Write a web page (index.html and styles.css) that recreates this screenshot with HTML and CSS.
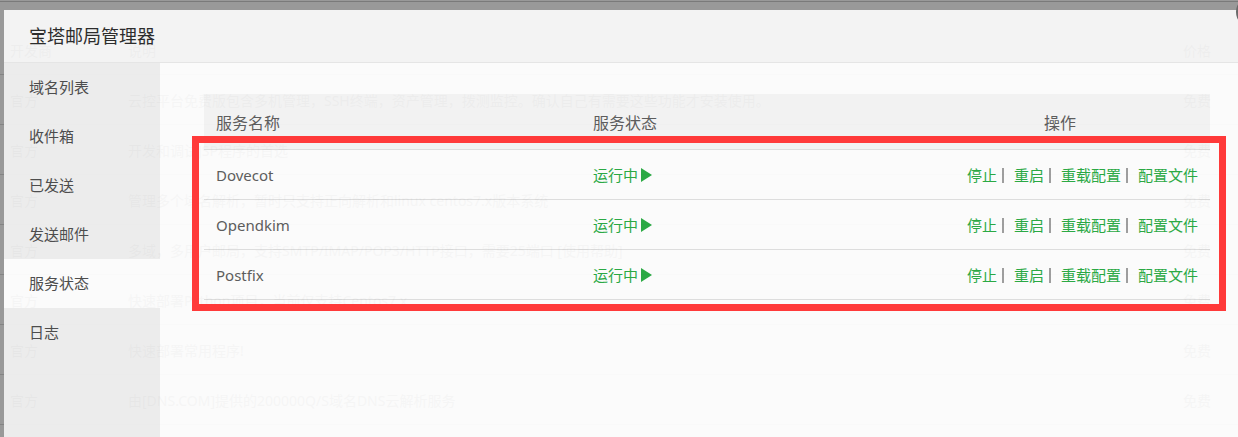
FILE: index.html
```html
<!DOCTYPE html>
<html lang="zh-CN">
<head>
    <meta charset="UTF-8">
    <meta name="viewport" content="width=device-width, initial-scale=1.0">
    <title>宝塔邮局管理器</title>
    <link rel="stylesheet" href="styles.css">
</head>
<body>
    <div class="page">
        <table class="soft-list">
            <colgroup>
                <col class="col-dev">
                <col>
                <col class="col-price">
            </colgroup>
            <thead>
                <tr><th>开发商</th><th>说明</th><th>价格</th></tr>
            </thead>
            <tbody>
                <tr><td>官方</td><td>云控平台免费版包含多机管理，SSH终端，资产管理，拨测监控。确认自己有需要这些功能才安装使用。</td><td>免费</td></tr>
                <tr><td>官方</td><td>开发和调试JSP程序的首选</td><td>免费</td></tr>
                <tr><td>官方</td><td>管理多个域名解析，暂时只支持正向解析和linux centos7.x版本系统</td><td>免费</td></tr>
                <tr><td>官方</td><td>多域，多用户邮局，支持SMTP/IMAP/POP3/HTTP接口，需要25端口 [使用帮助]</td><td>免费</td></tr>
                <tr><td>官方</td><td>快速部署Python项目，当前仅支持Centos7.x</td><td>免费</td></tr>
                <tr><td>官方</td><td>快速部署常用程序!</td><td>免费</td></tr>
                <tr><td>官方</td><td>由[DNS.COM]提供的200000Q/S域名DNS云解析服务</td><td>免费</td></tr>
            </tbody>
        </table>
    </div>

    <div class="layer">
        <div class="layer-title">宝塔邮局管理器</div>
        <div class="layer-body">
            <ul class="mail-menu">
                <li>域名列表</li>
                <li>收件箱</li>
                <li>已发送</li>
                <li>发送邮件</li>
                <li class="on">服务状态</li>
                <li>日志</li>
            </ul>
            <div class="mail-content">
                <table class="service-table">
                    <colgroup>
                        <col class="col-name">
                        <col class="col-state">
                        <col class="col-opt">
                    </colgroup>
                    <thead>
                        <tr><th>服务名称</th><th>服务状态</th><th class="opt-head">操作</th></tr>
                    </thead>
                    <tbody>
                        <tr>
                            <td>Dovecot</td>
                            <td><span class="state">运行中<svg class="play" viewBox="0 0 11 14"><polygon points="0,0 11,7 0,14"/></svg></span></td>
                            <td class="opt"><a>停止</a><i class="sep"></i><a>重启</a><i class="sep"></i><a>重载配置</a><i class="sep"></i><a>配置文件</a></td>
                        </tr>
                        <tr>
                            <td>Opendkim</td>
                            <td><span class="state">运行中<svg class="play" viewBox="0 0 11 14"><polygon points="0,0 11,7 0,14"/></svg></span></td>
                            <td class="opt"><a>停止</a><i class="sep"></i><a>重启</a><i class="sep"></i><a>重载配置</a><i class="sep"></i><a>配置文件</a></td>
                        </tr>
                        <tr>
                            <td>Postfix</td>
                            <td><span class="state">运行中<svg class="play" viewBox="0 0 11 14"><polygon points="0,0 11,7 0,14"/></svg></span></td>
                            <td class="opt"><a>停止</a><i class="sep"></i><a>重启</a><i class="sep"></i><a>重载配置</a><i class="sep"></i><a>配置文件</a></td>
                        </tr>
                    </tbody>
                </table>
            </div>
        </div>
    </div>
    <span class="layer-close"></span>

    <div class="mark-box"></div>
</body>
</html>
```

FILE: styles.css
```css
html, body {
    margin: 0;
    padding: 0;
    overflow: hidden;
    height: 100%;
}
body {
    font-family: "Microsoft YaHei", "Noto Sans", "Noto Sans CJK SC", sans-serif;
    background-color: #fff;
    color: #333;
}
.page {
    border-top: 1px solid #ccc;
    margin-top: 1px;
}
.soft-list {
    width: 100%;
    margin-top: 23px;
    border-collapse: collapse;
    table-layout: fixed;
    font-size: 14px;
    color: #888;
}
.soft-list .col-dev {
    width: 118px;
}
.soft-list .col-price {
    width: 65px;
}
.soft-list th, .soft-list td {
    height: 49px;
    padding: 0 10px;
    text-align: left;
    font-weight: normal;
    border-bottom: 1px solid #ddd;
    white-space: nowrap;
    overflow: hidden;
}

.layer {
    position: absolute;
    left: 4px;
    top: 10px;
    width: 1300px;
    height: 520px;
    opacity: 0.95;
    box-shadow: 0 0 0 3000px rgba(0, 0, 0, 0.42);
    display: flex;
    flex-direction: column;
}
.layer-title {
    height: 52px;
    line-height: 52px;
    padding-left: 25px;
    font-size: 18px;
    color: #222;
    background-color: #f3f3f3;
    border-bottom: 1px solid #e4e4e4;
}
.layer-body {
    flex: 1;
    display: flex;
}
.mail-menu {
    width: 156px;
    margin: 0;
    padding: 0;
    list-style: none;
    background-color: #ececec;
}
.mail-menu li {
    height: 49px;
    line-height: 49px;
    padding-left: 25px;
    font-size: 15px;
    color: #444;
}
.mail-menu li.on {
    background-color: #fbfbfb;
}
.mail-content {
    flex: 1;
    background-color: #fbfbfb;
    padding: 31px 0 0 44px;
}

.service-table {
    width: 1006px;
    border-collapse: collapse;
    table-layout: fixed;
    color: #555;
}
.service-table .col-name {
    width: 377px;
}
.service-table .col-state {
    width: 329px;
}
.service-table th {
    height: 55px;
    padding: 0 12px;
    text-align: left;
    font-weight: normal;
    font-size: 16px;
    background-color: #f2f2f2;
    border-bottom: 1px solid #dcdcdc;
}
.service-table th.opt-head {
    text-align: center;
}
.service-table td {
    height: 49px;
    padding: 0 12px;
    font-size: 15px;
    border-bottom: 1px solid #dcdcdc;
}
.state {
    color: #20a53a;
    display: inline-flex;
    align-items: center;
}
.play {
    width: 11px;
    height: 14px;
    margin-left: 3px;
    fill: #20a53a;
}
.opt {
    text-align: right;
    white-space: nowrap;
}
.opt a {
    color: #20a53a;
    cursor: pointer;
}
.sep {
    display: inline-block;
    width: 2px;
    height: 15px;
    margin: 0 10px 0 5px;
    background-color: #999;
    vertical-align: -2px;
}

.layer-close {
    position: absolute;
    left: 1236px;
    top: -4px;
    width: 28px;
    height: 28px;
    border-radius: 50%;
    border: 2px solid #6a6a6a;
    background-color: #f4f4f4;
}
.mark-box {
    position: absolute;
    left: 192px;
    top: 136px;
    width: 1034px;
    height: 175px;
    box-sizing: border-box;
    border: 7px solid #ff3a3a;
}
```
